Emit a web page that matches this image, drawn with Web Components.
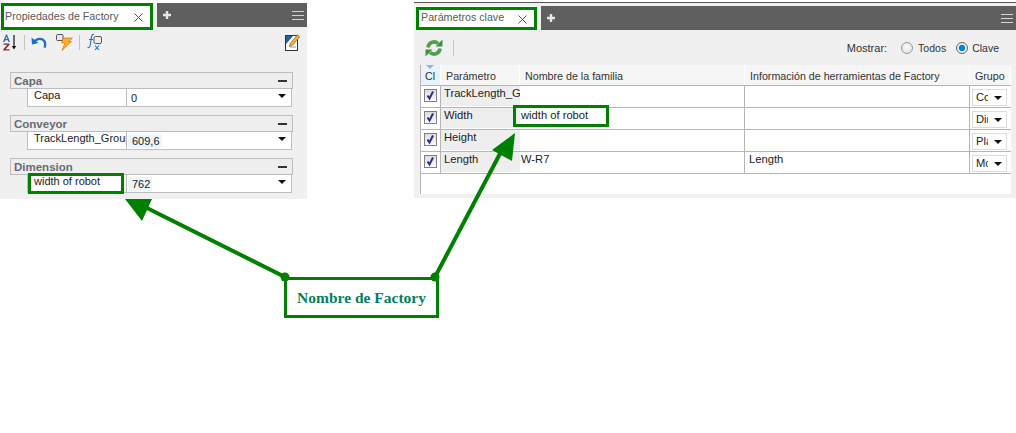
<!DOCTYPE html>
<html lang="es">
<head>
<meta charset="utf-8">
<title>Factory</title>
<style>
html,body{margin:0;padding:0;background:#fff;}
body{width:1016px;height:433px;overflow:hidden;position:relative;font:11px "Liberation Sans",Tahoma,sans-serif;color:#333;}
</style>
</head>
<body>
<doc-sheet>
	<prop-panel slot="left"></prop-panel>
	<param-panel slot="right"></param-panel>
</doc-sheet>
<note-layer></note-layer>

<script>
class DocSheet extends HTMLElement{
	constructor(){
		super();
		const root = this.attachShadow({mode:'open'});
		root.innerHTML = `
			<style>
				:host{ display:flex; align-items:flex-start; gap:107px; padding-top:3px; }
				::slotted([slot=left]){ flex:0 0 307px; }
				::slotted([slot=right]){ flex:0 0 602px; margin-top:-1px; }
			</style>
			<slot name="left"></slot>
			<slot name="right"></slot>
		`;
	}
}
customElements.define('doc-sheet', DocSheet);

class TabBar extends HTMLElement{
	static get observedAttributes(){ return ['label']; }
	constructor(){
		super();
		const root = this.attachShadow({mode:'open'});
		root.innerHTML = `
			<style>
				:host{ display:flex; align-items:flex-start; gap:5px; height:var(--tab-h,27px); background:#f0f0f0; }
				.tab{ flex:0 0 var(--tab-w,150px); height:var(--tab-h,27px); box-sizing:border-box; margin-left:2px; background:#fff;
					display:flex; align-items:center; justify-content:space-between; padding:0 9px 0 var(--tab-pad,3px);
					font:10.700px "Liberation Sans",sans-serif; color:#5a5a5a; }
				.t{ padding-bottom:2px; }
				.x{ margin-top:2px; }
				.bar{ flex:1; height:24px; background:#5f5f5f; display:flex; align-items:center; justify-content:space-between; padding:0 var(--bar-right,3px) 0 6px; }
				svg{ display:block; }
			</style>
			<div class="tab"><span class="t"></span>
				<svg class="x" width="9" height="9" viewBox="0 0 9 9"><path d="M.5 .5l8 8M8.500 .5l-8 8" stroke="#555" stroke-width="1" fill="none"/></svg>
			</div>
			<div class="bar">
				<svg width="8" height="8" viewBox="0 0 8 8"><path d="M4 0v8M0 4h8" stroke="#e6e6e6" stroke-width="2.400" fill="none"/></svg>
				<svg width="12" height="9" viewBox="0 0 12 9"><path d="M0 .5h12M0 4.500h12M0 8.500h12" stroke="#d4d4d4" stroke-width="1" fill="none"/></svg>
			</div>
		`;
		this.$t = root.querySelector('.t');
	}
	connectedCallback(){ this.#sync(); }
	attributeChangedCallback(){ this.#sync(); }
	#sync(){ this.$t.textContent = this.getAttribute('label') || ''; }
}
customElements.define('tab-bar', TabBar);

class PropGroup extends HTMLElement{
	static get observedAttributes(){ return ['title','name','value','shade']; }
	constructor(){
		super();
		const root = this.attachShadow({mode:'open'});
		root.innerHTML = `
			<style>
				:host{ display:block; margin:0 14px 0 10px; }
				.head{ height:17px; box-sizing:border-box; border:1px solid #bdbdbd; background:#eeeeee; display:flex; align-items:center; justify-content:space-between;
					padding:0 5px 0 3px; font:bold 11.500px "Liberation Sans",sans-serif; color:#6a6a72; }
				.dash{ width:9px; height:2px; background:#333; }
				.row{ margin:0 1px 0 17px; height:18px; box-sizing:border-box; border:1px solid #bdbdbd; border-top:0; background:#fff; display:grid; grid-template-columns:99px 1fr 20px; color:#222; }
				.name{ padding:0 0 0 6px; line-height:13px; white-space:nowrap; overflow:hidden; border-right:1px solid #bdbdbd; }
				.val{ padding:2px 0 0 1px; line-height:14px; }
				.val span{ display:inline-block; padding:0 2px 0 3px; }
				.val.shade span{ background:#eef6fd; padding-left:4px; }
				.arrow{ width:0; height:0; border:4px solid transparent; border-top:4px solid #111; border-bottom:0; margin:5px 0 0 7px; }
			</style>
			<div class="head"><span class="h"></span><span class="dash"></span></div>
			<div class="row"><div class="name"></div><div class="val"><span class="v"></span></div><div class="arrow"></div></div>
		`;
		this.$h = root.querySelector('.h');
		this.$n = root.querySelector('.name');
		this.$v = root.querySelector('.v');
		this.$val = root.querySelector('.val');
	}
	connectedCallback(){ this.#sync(); }
	attributeChangedCallback(){ this.#sync(); }
	#sync(){
		this.$h.textContent = this.getAttribute('title') || '';
		this.$n.textContent = this.getAttribute('name') || '';
		this.$v.textContent = this.getAttribute('value') || '';
		this.$val.classList.toggle('shade', this.hasAttribute('shade'));
	}
}
customElements.define('prop-group', PropGroup);

class PropPanel extends HTMLElement{
	constructor(){
		super();
		const root = this.attachShadow({mode:'open'});
		root.innerHTML = `
			<style>
				:host{ display:block; height:196px; background:#f0f0f0; font:11px "Liberation Sans",sans-serif; }
				.tools{ height:24px; display:flex; align-items:center; padding:0 7px 0 2px; margin-bottom:18px; }
				.tools svg{ display:block; flex:none; }
				.sep{ width:1px; height:15px; background:#c4c4c4; flex:none; }
				.push{ flex:1; }
				.groups{ display:flex; flex-direction:column; gap:8px; }
			</style>
			<tab-bar label="Propiedades de Factory"></tab-bar>
			<div class="tools">
				<svg width="15" height="17" viewBox="0 0 15 17" style="margin-right:7px">
					<path d="M4 .5L1 8h1.500l.6-1.700h2.800L6.500 8H8L5 .5zM3.500 5l1-2.600L5.400 5z" fill="#2f63a8"/>
					<path d="M1.500 9.500h6v1.300l-4 4.500h4v1.200H1.300v-1.300l4-4.500H1.500z" fill="#8b2c2c"/>
					<path d="M12 1v11" stroke="#111" stroke-width="1.200"/><path d="M9.800 12h4.400L12 15.500z" fill="#111"/>
				</svg>
				<span class="sep"></span>
				<svg width="16" height="13" viewBox="0 0 16 13" style="margin-left:6px">
					<path d="M3 6.200C5 3 9 2 12 3.800c2.300 1.400 2.600 4.400 1.600 7.800" stroke="#1d6fc4" stroke-width="2.400" fill="none"/>
					<path d="M.5 1.500L1 8.600 7.400 7z" fill="#1d6fc4"/>
				</svg>
				<svg width="17" height="17" viewBox="0 0 17 17" style="margin-left:9px">
					<rect x=".5" y=".5" width="6.500" height="6" rx="1" fill="#e8e8e8" stroke="#555"/>
					<path d="M7.500 4h9l-4 3.500h3L6 16.500 9 9H5.500z" fill="#f6b02c" stroke="#d9730d" stroke-width=".7"/>
				</svg>
				<span class="sep" style="margin-left:6px"></span>
				<svg width="16" height="18" viewBox="0 0 16 18" style="margin-left:7px">
					<path d="M.5 14.500c2 .6 2.400-.8 2.800-3L4.500 4C4.800 2 5.500 1 7 1.500" stroke="#1d6fc4" stroke-width="1.100" fill="none"/>
					<path d="M2 6.500h4" stroke="#1d6fc4" stroke-width="1"/>
					<rect x="7" y="3.500" width="7.500" height="7" rx="1.500" fill="#eee" stroke="#555"/>
					<path d="M8 12.500l4 4.500M12 12.500l-4 4.500" stroke="#1d6fc4" stroke-width="1.100"/>
				</svg>
				<span class="push"></span>
				<svg width="15" height="17" viewBox="0 0 15 17">
					<rect x=".5" y="1.500" width="12" height="15" fill="#fff" stroke="#333"/>
					<path d="M1 2h7L1 10z" fill="#2a5f96"/>
					<path d="M5 13h6" stroke="#999" stroke-width="1"/>
					<path d="M12.500 .8l2.200 2-7 8.200-3.400 1.500 1.200-3.500z" fill="#f2b233" stroke="#8a5a10" stroke-width=".7"/>
				</svg>
			</div>
			<div class="groups">
				<prop-group title="Capa" name="Capa" value="0"></prop-group>
				<prop-group title="Conveyor" name="TrackLength_Group" value="609,6" shade></prop-group>
				<prop-group title="Dimension" name="width of robot" value="762" shade></prop-group>
			</div>
		`;
	}
}
customElements.define('prop-panel', PropPanel);

class ParamRow extends HTMLElement{
	static get observedAttributes(){ return ['name','family','tip','group']; }
	constructor(){
		super();
		const root = this.attachShadow({mode:'open'});
		root.innerHTML = `
			<style>
				:host{ display:grid; grid-template-columns:20px 79px 225px 225px 41px; height:22px; box-sizing:border-box; border-bottom:1px solid #b5b5b5; background:#fff; color:#222; font-size:11.200px; }
				div{ border-right:1px solid #b5b5b5; box-sizing:border-box; padding:0 0 0 3px; line-height:15px; white-space:nowrap; overflow:hidden; }
				.chk{ padding:3px 0 0 3px; }
				.box{ width:13px; height:13px; box-sizing:border-box; border:1px solid #808080; background:linear-gradient(#dcdcdc,#fbfbfb); display:block; }
				.box svg{ display:block; }
				.name{ background:#eeeeee; margin-bottom:1px; padding-left:3px; border-right:0; }
				.cell{ padding-left:1px; }
				.tip{ padding-left:4px; }
				.grp{ border-right:0; padding:3px 0 0 2px; overflow:visible; }
				.sel{ width:35px; height:17px; box-sizing:border-box; border:1px solid #dcdcdc; background:#fff; padding:0 0 0 3px; display:flex; align-items:center; justify-content:space-between; line-height:15px; overflow:hidden; }
				.sel span{ width:12px; overflow:hidden; }
				.sel i{ width:0; height:0; border:4px solid transparent; border-top:4px solid #111; border-bottom:0; margin-right:4px; flex:none; }
			</style>
			<div class="chk"><span class="box"><svg width="11" height="11" viewBox="0 0 11 11"><path d="M2.500 5.500l2 3 3.500-7" stroke="#2b2f8f" stroke-width="2" fill="none"/></svg></span></div>
			<div class="name"></div>
			<div class="cell fam"></div>
			<div class="cell tip"></div>
			<div class="grp"><span class="sel"><span class="g"></span><i></i></span></div>
		`;
		this.$n = root.querySelector('.name');
		this.$f = root.querySelector('.fam');
		this.$t = root.querySelector('.tip');
		this.$g = root.querySelector('.g');
	}
	connectedCallback(){ this.#sync(); }
	attributeChangedCallback(){ this.#sync(); }
	#sync(){
		this.$n.textContent = this.getAttribute('name') || '';
		this.$f.textContent = this.getAttribute('family') || '';
		this.$t.textContent = this.getAttribute('tip') || '';
		this.$g.textContent = this.getAttribute('group') || '';
	}
}
customElements.define('param-row', ParamRow);

class ParamPanel extends HTMLElement{
	constructor(){
		super();
		const root = this.attachShadow({mode:'open'});
		root.innerHTML = `
			<style>
				:host{ display:block; height:196px; box-sizing:border-box; background:#f0f0f0; border-top:1px solid #555; font:11px "Liberation Sans",sans-serif; --tab-w:120px; --tab-h:24px; --tab-pad:5px; --bar-right:4px; }
				tab-bar{ margin-top:3px; }
				.tools{ height:35px; display:flex; align-items:center; padding:0 0 0 11px; color:#333; box-sizing:border-box; }
				.tools svg{ display:block; flex:none; }
				.sep{ width:1px; height:16px; background:#c8c8c8; margin:0 0 0 10px; }
				.push{ flex:1; }
				.radio{ width:10px; height:10px; border-radius:50%; border:1px solid #999; background:radial-gradient(circle at 50% 40%,#fbfbfb,#ddd); flex:none; }
				.radio.on{ border-color:#666; background:radial-gradient(circle,#0c86c9 0 3px,#eee 3.600px); }
				.lbl{ margin-left:5px; font-size:10.500px; }
				.table{ margin:0 6px 0 6px; border-left:1px solid #b5b5b5; background:#fff; height:129px; }
				.head{ display:grid; grid-template-columns:20px 79px 225px 225px 41px; height:20px; border-bottom:1px solid #b5b5b5; box-sizing:content-box; color:#333; font-size:10.700px; }
				.head div{ background:#f6f6f6; border-right:1px solid #fff; padding:4px 0 0 5px; line-height:15px; white-space:nowrap; overflow:hidden; box-sizing:border-box; }
				.head .first{ background:#e7f2fb; padding-left:4px; position:relative; }
				.head .first::before{ content:""; position:absolute; left:5px; top:0; border:4px solid transparent; border-top:4px solid #8fb2d6; border-bottom:0; }
			</style>
			<tab-bar label="Parámetros clave"></tab-bar>
			<div class="tools">
				<svg width="18" height="18" viewBox="0 0 18 18">
					<path d="M3 8.500A6 6 0 0 1 13 4.500" fill="none" stroke="#4c9f4c" stroke-width="3.600"/>
					<path d="M15 9.500A6 6 0 0 1 5 13.500" fill="none" stroke="#4c9f4c" stroke-width="3.600"/>
					<path d="M10.500 7.500h7v-7z" fill="#3f8f3f"/>
					<path d="M7.500 10.500h-7v7z" fill="#3f8f3f"/>
				</svg>
				<span class="sep"></span>
				<span class="push"></span>
				<span>Mostrar:</span>
				<span class="radio" style="margin-left:14px"></span><span class="lbl">Todos</span>
				<span class="radio on" style="margin-left:10px"></span><span class="lbl" style="margin:0 18px 0 4px">Clave</span>
			</div>
			<div class="table">
				<div class="head"><div class="first">Cl</div><div>Parámetro</div><div>Nombre de la familia</div><div>Información de herramientas de Factory</div><div>Grupo</div></div>
				<param-row name="TrackLength_Group" group="Co"></param-row>
				<param-row name="Width" family="width of robot" group="Dir"></param-row>
				<param-row name="Height" group="Pla"></param-row>
				<param-row name="Length" family="W-R7" tip="Length" group="Mc"></param-row>
			</div>
		`;
	}
}
customElements.define('param-panel', ParamPanel);

// callouts drawn over the panels
class NoteLayer extends HTMLElement{
	constructor(){
		super();
		const root = this.attachShadow({mode:'open'});
		root.innerHTML = `
			<style>
				:host{ position:absolute; left:0; top:0; width:1016px; height:433px; display:block; pointer-events:none; }
				svg{ position:absolute; left:0; top:0; }
				.box{ position:absolute; left:284px; top:277px; width:155px; height:41px; box-sizing:border-box; border:3px solid #008000; padding-top:1px;
					display:flex; align-items:center; justify-content:center; background:#fff;
					font:bold 15.500px "Liberation Serif",serif; color:#008060; }
			</style>
			<div class="box">Nombre de Factory</div>
			<svg width="1016" height="433" viewBox="0 0 1016 433">
				<g fill="none" stroke="#008000" stroke-width="3">
					<rect x="2.500" y="4.500" width="149" height="24"/>
					<rect x="417.500" y="8.500" width="118" height="20"/>
					<rect x="29.500" y="174.500" width="93" height="18"/>
					<rect x="514.500" y="106.500" width="93" height="19"/>
				</g>
				<g stroke="#008000" stroke-width="4" fill="none">
					<path d="M285 277L145 207"/>
					<path d="M435 277L503 148"/>
				</g>
				<g fill="#008000">
					<path d="M125 199L152 199L142 221z"/>
					<path d="M515 133L492 150L512 161z"/>
					<circle cx="285" cy="277" r="4.500"/>
					<circle cx="435" cy="277" r="4.500"/>
				</g>
			</svg>
		`;
	}
}
customElements.define('note-layer', NoteLayer);
</script>
</body>
</html>
